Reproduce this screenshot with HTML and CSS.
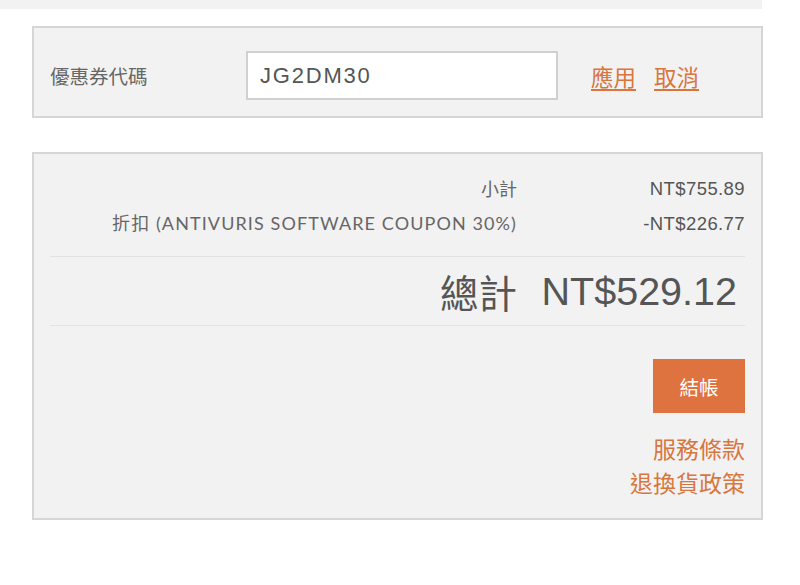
FILE: index.html
```html
<!DOCTYPE html>
<html lang="zh-Hant">
  <head>
    <meta charset="UTF-8" />
    <meta name="viewport" content="width=device-width, initial-scale=1.0" />
    <title>購物車結帳</title>
    <link rel="stylesheet" href="styles.css">
  </head>
  <body>
    <div class="top-strip"></div>

    <div class="cart">
      <div class="coupon-box">
        <label for="coupon" class="coupon-label">優惠券代碼</label>
        <input type="text" id="coupon" class="coupon-input" value="JG2DM30" />
        <div class="coupon-actions">
          <a href="#" class="link">應用</a>
          <a href="#" class="link">取消</a>
        </div>
      </div>

      <div class="summary-box">
        <div class="summary-lines">
          <div class="summary-label">小計</div>
          <div class="summary-value">NT$755.89</div>
          <div class="summary-label discount">折扣 (ANTIVURIS SOFTWARE COUPON 30%)</div>
          <div class="summary-value">-NT$226.77</div>
        </div>

        <div class="summary-total">
          <div class="total-label">總計</div>
          <div class="total-value">NT$529.12</div>
        </div>

        <div class="checkout">
          <button class="checkout-button">結帳</button>
          <div class="policy-links">
            <a href="#" class="policy-link">服務條款</a>
            <a href="#" class="policy-link">退換貨政策</a>
          </div>
        </div>
      </div>
    </div>
  </body>
</html>
```

FILE: styles.css
```css
body {
  font-family: 'Liberation Sans', 'Noto Sans CJK TC', sans-serif;
  margin: 0;
  padding: 0;
  background: #fff;
  color: #666;
}

.top-strip {
  width: 762px;
  height: 9px;
  background: #f2f2f2;
}

.cart {
  width: 731px;
  margin-left: 32px;
  padding-top: 17px;
}

/* coupon */

.coupon-box {
  display: flex;
  align-items: center;
  height: 92px;
  padding: 7px 16px 0;
  box-sizing: border-box;
  background: #f2f2f2;
  border: 2px solid #d6d6d6;
}

.coupon-label {
  width: 196px;
  flex-shrink: 0;
  font-family: 'Noto Sans CJK TC', sans-serif;
  font-size: 19.5px;
  color: #666;
}

.coupon-input {
  width: 312px;
  height: 49px;
  box-sizing: border-box;
  padding: 0 12px;
  border: 2px solid #d0d0d0;
  background: #fff;
  font-family: 'Liberation Sans', sans-serif;
  font-size: 22px;
  letter-spacing: 1.8px;
  color: #555;
  outline: none;
}

.coupon-actions {
  display: flex;
  gap: 18px;
  margin-left: 33px;
}

.link {
  font-family: 'Noto Sans CJK TC', sans-serif;
  font-size: 22.5px;
  color: #d8763f;
  text-decoration: underline;
  text-underline-offset: 3px;
}

/* summary */

.summary-box {
  margin-top: 34px;
  padding: 0 16px 19px;
  background: #f2f2f2;
  border: 2px solid #d6d6d6;
}

.summary-lines {
  display: grid;
  grid-template-columns: 1fr 200px;
  column-gap: 28px;
  padding: 17px 0 15px;
  border-bottom: 1px solid #e2e2e2;
  font-size: 18.5px;
  line-height: 35px;
}

.summary-label {
  text-align: right;
  font-family: 'Noto Sans CJK TC', sans-serif;
  font-size: 18px;
  color: #666;
}

.summary-label.discount {
  font-family: 'Lato', 'Noto Sans CJK TC', sans-serif;
  letter-spacing: 1.1px;
}

.summary-value {
  text-align: right;
  color: #555;
  letter-spacing: 0.4px;
}

.summary-total {
  display: grid;
  grid-template-columns: 1fr 210px;
  column-gap: 18px;
  align-items: center;
  height: 68px;
  border-bottom: 1px solid #e2e2e2;
  color: #555;
}

.total-label {
  text-align: right;
  font-family: 'Noto Sans CJK TC', sans-serif;
  font-size: 38.5px;
}

.total-value {
  text-align: right;
  padding-right: 8px;
  font-size: 39.5px;
}

.checkout {
  display: flex;
  flex-direction: column;
  align-items: flex-end;
  padding-top: 33px;
}

.checkout-button {
  width: 92px;
  height: 54px;
  border: none;
  background: #df7340;
  color: #fff;
  font-family: 'Noto Sans CJK TC', sans-serif;
  font-size: 19.5px;
  cursor: pointer;
}

.policy-links {
  display: flex;
  flex-direction: column;
  align-items: flex-end;
  margin-top: 18px;
}

.policy-link {
  font-family: 'Noto Sans CJK TC', sans-serif;
  font-size: 23px;
  line-height: 34px;
  color: #d8763f;
  text-decoration: none;
}
```
